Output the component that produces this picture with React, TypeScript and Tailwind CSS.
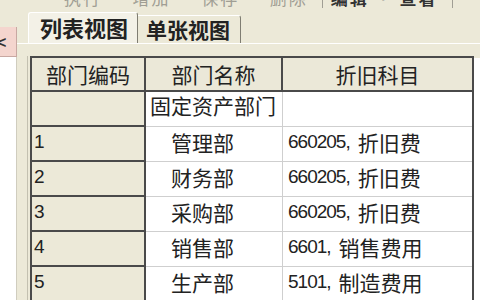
const rows = [
  { code: "", name: "固定资产部门", child: false, num: "", acct: "" },
  { code: "1", name: "管理部", child: true, num: "660205,", acct: "折旧费" },
  { code: "2", name: "财务部", child: true, num: "660205,", acct: "折旧费" },
  { code: "3", name: "采购部", child: true, num: "660205,", acct: "折旧费" },
  { code: "4", name: "销售部", child: true, num: "6601,", acct: "销售费用" },
  { code: "5", name: "生产部", child: true, num: "5101,", acct: "制造费用" },
];

function Toolbar() {
  return (
    <div className="h-[10px] overflow-hidden shrink-0">
      <div className="flex items-center mt-[-12px] pl-[64px] text-[17px] leading-[20px] whitespace-nowrap">
        <span className="text-[#a09e94] tracking-[2px]">执行 · 增加 · 保存 · 删除</span>
        <span className="ml-[14px] w-px h-[20px] bg-[#a09e94]" />
        <span className="ml-[8px] text-[#333] font-bold tracking-[2px]">编辑 · 查看</span>
        <span className="ml-[14px] w-px h-[20px] bg-[#a09e94]" />
      </div>
    </div>
  );
}

function Sidebar() {
  return (
    <div className="w-[17px] shrink-0 flex flex-col pt-[17px]">
      <div className="h-[30px] bg-[#f4d5ce] border-r border-b border-[#c8a8a2] flex items-center overflow-hidden pt-[3px]">
        <span className="ml-[-3px] text-[16px] font-bold text-[#333] font-['Liberation_Sans',sans-serif]">&lt;</span>
      </div>
      <div className="flex-1 bg-white border-r border-[#d0cdbf]" />
    </div>
  );
}

function Tabs() {
  return (
    <div className="h-[33px] shrink-0 flex items-end pl-[11px]">
      <div className="w-[110px] h-[31px] bg-[#f3f1e7] border-l border-t border-white border-r border-r-[#7f7d72] rounded-t-[3px] pl-[11px] text-[22px] leading-[28px] font-bold text-[#222]">
        列表视图
      </div>
      <div className="w-[103px] h-[28px] border-t border-white border-r border-r-[#7f7d72] rounded-tr-[3px] pl-[8px] text-[21px] leading-[26px] font-bold text-[#222]">
        单张视图
      </div>
    </div>
  );
}

function Grid() {
  return (
    <div className="flex flex-1 min-h-0">
      <div className="w-[444px] shrink-0 border-l-2 border-r-2 border-t-2 border-[#4a4a4a] flex flex-col text-[#222]">
        <div className="h-[34px] shrink-0 flex bg-[#ebe8d8] text-[21px] leading-[30px]">
          <div className="w-[114px] border-r-2 border-b-2 border-[#4a4a4a] flex items-center justify-center">部门编码</div>
          <div className="w-[137px] border-r-2 border-b-2 border-[#4a4a4a] flex items-center justify-center">部门名称</div>
          <div className="w-[189px] border-b-2 border-[#4a4a4a] flex items-center justify-center">折旧科目</div>
        </div>
        {rows.map((r, i) => (
          <div key={i} className="h-[35px] shrink-0 flex">
            <div className="w-[114px] bg-[#ece9d8] border-r-2 border-b-2 border-[#4a4a4a] pl-[2px] pt-[2px] text-[19px] tracking-[-1px] leading-[26px] font-['Liberation_Sans',sans-serif]">
              {r.code}
            </div>
            <div
              className={`w-[137px] bg-white border-r border-b border-[#cfcfcf] text-[21px] leading-[26px] ${
                r.child ? "pl-[25px] pt-[2px]" : "pl-[4px] pt-0"
              }`}
            >
              {r.name}
            </div>
            <div className="w-[189px] bg-white border-b border-[#cfcfcf] pl-[5px] pt-[2px] flex items-start whitespace-nowrap">
              {r.num && (
                <>
                  <span className="text-[19px] tracking-[-1px] leading-[26px] font-['Liberation_Sans',sans-serif]">{r.num}</span>
                  <span className="ml-[8px] text-[21px] leading-[26px]">{r.acct}</span>
                </>
              )}
            </div>
          </div>
        ))}
      </div>
      <div className="flex-1 bg-white mt-[2px]" />
    </div>
  );
}

function Panel() {
  return (
    <div className="flex-1 min-h-0 flex flex-col border-t border-white">
      <div className="h-[12px] shrink-0" />
      <div className="flex-1 min-h-0 flex pl-[10px]">
        <div className="flex-1 min-h-0 flex border-l border-[#c3c0b0] pl-[2px]">
          <Grid />
        </div>
      </div>
    </div>
  );
}

export default function App() {
  return (
    <div className="w-[480px] h-[300px] overflow-hidden bg-[#ece9d8] flex flex-col font-['Noto_Sans_CJK_SC',sans-serif]">
      <Toolbar />
      <div className="flex flex-1 min-h-0">
        <Sidebar />
        <div className="flex-1 min-w-0 flex flex-col">
          <Tabs />
          <Panel />
        </div>
      </div>
    </div>
  );
}
